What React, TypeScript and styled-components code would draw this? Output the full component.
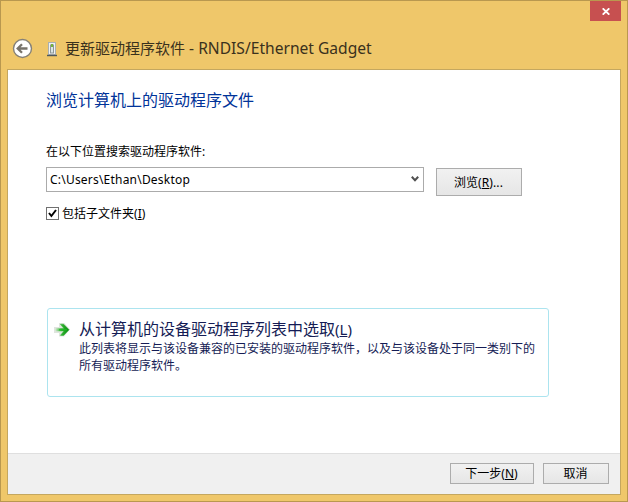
import React from "react";
import styled, { createGlobalStyle } from "styled-components";

const GlobalStyle = createGlobalStyle`
  * { box-sizing: border-box; }
  body {
    margin: 0;
    overflow: hidden;
    font-family: "Noto Sans", "Noto Sans CJK SC", sans-serif;
    font-size: 12px;
    color: #000;
  }
`;

const Window = styled.div`
  width: 628px;
  height: 502px;
  display: flex;
  flex-direction: column;
  padding: 0 6px 6px;
  background: #efc76a;
  border: 1px solid #b9984f;
`;

const Caption = styled.div`
  height: 20px;
  display: flex;
  justify-content: flex-end;
`;

const CloseButton = styled.button`
  width: 31px;
  height: 20px;
  padding: 1px 0 0;
  display: flex;
  align-items: center;
  justify-content: center;
  border: 0;
  background: #c75050;
`;

const TitleBar = styled.header`
  height: 48px;
  display: flex;
  align-items: center;
  padding: 7px 0 0 5px;
`;

const DeviceSlot = styled.span`
  display: flex;
  margin: 0 7px 0 13px;
`;

const Text = styled.span<{ $size?: number; $color?: string }>`
  font-family: "Noto Sans CJK SC", sans-serif;
  font-size: ${(p) => p.$size ?? 12}px;
  line-height: 1.4;
  color: ${(p) => p.$color ?? "#000"};
  white-space: nowrap;
`;

const TitleText = styled(Text)`
  padding-bottom: 2px;
`;

const Latin = styled.span<{ $spacing?: number; $size?: number }>`
  font-family: "Noto Sans", sans-serif;
  font-size: ${(p) => (p.$size ? `${p.$size}px` : "inherit")};
  line-height: 1;
  letter-spacing: ${(p) => p.$spacing ?? 0}px;
  white-space: pre;
`;

const Key = styled.span`
  text-decoration: underline;
  text-underline-offset: 1px;
  text-decoration-thickness: 1px;
`;

const Panel = styled.main`
  flex: 1;
  display: flex;
  flex-direction: column;
  background: #fff;
  border: 1px solid #c4a75f;
`;

const Content = styled.section`
  flex: 1;
  display: flex;
  flex-direction: column;
  align-items: flex-start;
  padding: 17px 0 0 38px;
`;

const Heading = styled.h1`
  height: 24px;
  margin: 0 0 31px;
  display: flex;
  align-items: center;
  font-weight: 400;
`;

const FieldLabel = styled.label`
  height: 18px;
  display: flex;
  align-items: center;
`;

const FieldRow = styled.div`
  display: flex;
  align-items: flex-start;
  gap: 12px;
  margin-top: 7px;
`;

const Combo = styled.div`
  width: 378px;
  height: 25px;
  display: flex;
  align-items: center;
  justify-content: space-between;
  padding: 0 4px 1px 3px;
  border: 1px solid #ababab;
`;

const Button = styled.button<{ $width: number; $height: number }>`
  width: ${(p) => p.$width}px;
  height: ${(p) => p.$height}px;
  padding: 0 1px 0 0;
  display: flex;
  align-items: center;
  justify-content: center;
  border: 1px solid #acacac;
  background: linear-gradient(#f1f1f1, #e6e6e6);
`;

const BrowseSlot = styled.div`
  padding-top: 1px;
`;

const CheckRow = styled.label`
  height: 19px;
  margin-top: 8px;
  display: flex;
  align-items: center;
  gap: 3px;
`;

const CheckBox = styled.span`
  width: 13px;
  height: 13px;
  display: flex;
  border: 1px solid #707070;
  background: #fff;
`;

const CommandLink = styled.button`
  width: 502px;
  height: 89px;
  margin: 85px 0 0 1px;
  padding: 8px 0 0 6px;
  display: flex;
  align-items: flex-start;
  gap: 9px;
  text-align: left;
  border: 1px solid #ace4ef;
  border-radius: 3px;
  background: #fff;
`;

const ArrowSlot = styled.span`
  display: flex;
  padding-top: 5px;
`;

const LinkBody = styled.span`
  display: flex;
  flex-direction: column;
`;

const LinkTitle = styled.span`
  height: 22px;
  display: flex;
  align-items: center;
`;

const LinkNote = styled.span`
  font: 12px/17px "Noto Sans CJK SC", sans-serif;
  color: #151c55;
  white-space: nowrap;
`;

const Footer = styled.footer`
  height: 41px;
  display: flex;
  justify-content: flex-end;
  gap: 9px;
  padding: 9px 11px 0 0;
  border-top: 1px solid #dfdfdf;
  background: #f0f0f0;
`;

const BackIcon = () => (
  <svg width="21" height="21" viewBox="0 0 21 21">
    <circle cx="10.5" cy="10.5" r="9" fill="#fff" stroke="#858178" strokeWidth="1.4" />
    <path d="M6 10.5H15.5M10 6.2L5.7 10.5L10 14.8" fill="none" stroke="#77736b" strokeWidth="2.3" />
  </svg>
);

const DeviceIcon = () => (
  <svg width="12" height="16" viewBox="0 0 12 16">
    <rect x="2.5" y="1.5" width="7" height="12" fill="#f0f2f2" stroke="#a9b0b2" />
    <rect x="4.5" y="4" width="3" height="8" fill="#dbe5e4" stroke="#8d9899" />
    <rect x="5" y="3" width="2" height="3" fill="#77b43d" />
    <path d="M1 14.5H11" stroke="#4e585b" strokeWidth="1.4" />
  </svg>
);

const CloseIcon = () => (
  <svg width="8" height="7" viewBox="0 0 8 7">
    <path d="M.7.3L7.3 6.7M7.3.3L.7 6.7" stroke="#fff" strokeWidth="1.8" />
  </svg>
);

const ChevronIcon = () => (
  <svg width="8" height="6" viewBox="0 0 8 6">
    <path d="M.8.8L4 4.2L7.2.8" fill="none" stroke="#505050" strokeWidth="2" />
  </svg>
);

const CheckIcon = () => (
  <svg width="11" height="11" viewBox="0 0 11 11">
    <path d="M2 5L4.4 8L9 2" fill="none" stroke="#000" strokeWidth="2" />
  </svg>
);

const ArrowIcon = () => (
  <svg width="16" height="16" viewBox="0 0 16 16">
    <defs>
      <linearGradient id="tail" x1="0" x2="1">
        <stop offset="0" stopColor="#cfe6cc" />
        <stop offset=".4" stopColor="#35b835" />
        <stop offset="1" stopColor="#078c0e" />
      </linearGradient>
    </defs>
    <path d="M0 5H5V1H10.2L16 7.5L10.2 14.5H5V11H0Z" fill="#e0e5df" />
    <path d="M1.5 6.6H10L6.3 2.2H9.6L15 7.8L9.6 13.4H6.3L10 9H1.5Z" fill="url(#tail)" stroke="url(#tail)" strokeWidth=".5" />
    <path d="M5 7.8H13" stroke="#1fbe25" />
  </svg>
);

export default function App() {
  return (
    <>
      <GlobalStyle />
      <Window>
        <Caption>
          <CloseButton aria-label="关闭"><CloseIcon /></CloseButton>
        </Caption>
        <TitleBar>
          <BackIcon />
          <DeviceSlot><DeviceIcon /></DeviceSlot>
          <TitleText $size={15} $color="#3a311d">
            更新驱动程序软件<Latin $size={15.6}> - RNDIS/Ethernet Gadget</Latin>
          </TitleText>
        </TitleBar>
        <Panel>
          <Content>
            <Heading><Text $size={16} $color="#003399">浏览计算机上的驱动程序文件</Text></Heading>
            <FieldLabel><Text>在以下位置搜索驱动程序软件<Latin>:</Latin></Text></FieldLabel>
            <FieldRow>
              <Combo>
                <Text><Latin $spacing={0.21}>C:\Users\Ethan\Desktop</Latin></Text>
                <ChevronIcon />
              </Combo>
              <BrowseSlot>
                <Button $width={86} $height={28}>
                  <Text>浏览<Latin $spacing={0.1}>(<Key>R</Key>)...</Latin></Text>
                </Button>
              </BrowseSlot>
            </FieldRow>
            <CheckRow>
              <CheckBox><CheckIcon /></CheckBox>
              <Text>包括子文件夹<Latin>(<Key>I</Key>)</Latin></Text>
            </CheckRow>
            <CommandLink>
              <ArrowSlot><ArrowIcon /></ArrowSlot>
              <LinkBody>
                <LinkTitle>
                  <Text $size={16} $color="#151c55">
                    从计算机的设备驱动程序列表中选取<Latin $size={15}>(<Key>L</Key>)</Latin>
                  </Text>
                </LinkTitle>
                <LinkNote>
                  此列表将显示与该设备兼容的已安装的驱动程序软件，以及与该设备处于同一类别下的
                  <br />
                  所有驱动程序软件。
                </LinkNote>
              </LinkBody>
            </CommandLink>
          </Content>
          <Footer>
            <Button $width={84} $height={21}>
              <Text>下一步<Latin>(<Key>N</Key>)</Latin></Text>
            </Button>
            <Button $width={66} $height={21}><Text>取消</Text></Button>
          </Footer>
        </Panel>
      </Window>
    </>
  );
}
